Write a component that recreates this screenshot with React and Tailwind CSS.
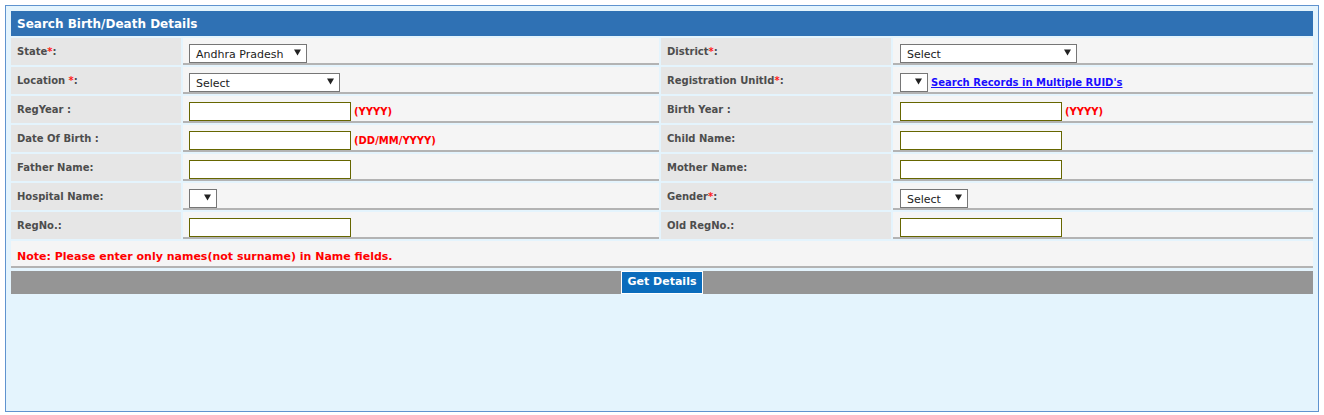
import React from "react";

const font = { fontFamily: '"DejaVu Sans", Verdana, sans-serif' };

function Star() {
  return <span className="text-[#ff1a1a]">*</span>;
}

function FakeSelect({ value, width }) {
  return (
    <div
      className={`flex h-[19px] justify-between border border-[#767676] bg-white pl-[6px] pr-[5px] ${width}`}
    >
      <span className="self-end pb-[1px] text-[11px] leading-[13px] text-[#222]">{value}</span>
      <svg width="7" height="7" viewBox="0 0 7 7" className="mt-[4px] shrink-0">
        <polygon points="0,0.5 7,0.5 3.5,6.5" fill="#222" />
      </svg>
    </div>
  );
}

function TextBox() {
  return <div className="h-[19px] w-[162px] border border-[#666600] bg-white" />;
}

function Hint({ children }) {
  return <span className="ml-[3px] text-[10px] font-bold leading-[19px] text-[#ff0000]">{children}</span>;
}

function Label({ children }) {
  return (
    <div className="flex items-center whitespace-pre bg-[#e6e6e6] pl-[6px] text-[10px] font-bold text-[#4d4d4d]">
      {children}
    </div>
  );
}

function Value({ children, left = "pl-[6px]" }) {
  return (
    <div className={`flex items-start border-b-2 border-[#b3b3b3] bg-[#f5f5f5] pt-[6px] ${left}`}>
      {children}
    </div>
  );
}

const rows = [
  {
    l1: <>State<Star />:</>,
    v1: <FakeSelect value="Andhra Pradesh" width="w-[118px]" />,
    l2: <>District<Star />:</>,
    v2: <FakeSelect value="Select" width="w-[177px]" />,
  },
  {
    l1: <>{"Location "}<Star />:</>,
    v1: <FakeSelect value="Select" width="w-[151px]" />,
    l2: <>Registration UnitId<Star />:</>,
    v2: (
      <div className="flex items-center gap-[3px]">
        <FakeSelect value="" width="w-[28px]" />
        <a href="#" className="text-[10px] font-bold text-[#1a0dff] underline">
          Search Records in Multiple RUID's
        </a>
      </div>
    ),
  },
  {
    l1: "RegYear :",
    v1: <><TextBox /><Hint>(YYYY)</Hint></>,
    l2: "Birth Year :",
    v2: <><TextBox /><Hint>(YYYY)</Hint></>,
  },
  {
    l1: "Date Of Birth :",
    v1: <><TextBox /><Hint>(DD/MM/YYYY)</Hint></>,
    l2: "Child Name:",
    v2: <TextBox />,
  },
  { l1: "Father Name:", v1: <TextBox />, l2: "Mother Name:", v2: <TextBox /> },
  {
    l1: "Hospital Name:",
    v1: <FakeSelect value="" width="w-[28px]" />,
    l2: <>Gender<Star />:</>,
    v2: <FakeSelect value="Select" width="w-[68px]" />,
  },
  { l1: "RegNo.:", v1: <TextBox />, l2: "Old RegNo.:", v2: <TextBox /> },
];

export default function App() {
  return (
    <div className="min-h-[415px] bg-white pt-[5px]" style={font}>
      <div className="mx-[5px] h-[407px] border border-[#5f93cf] bg-[#e4f4fd] p-[5px]">
        <div className="flex flex-col gap-[2px]">
          <div className="flex h-[25px] items-center bg-[#2f71b4] pl-[6px] text-[12px] font-bold text-white">
            Search Birth/Death Details
          </div>
          {rows.map((r, i) => (
            <div key={i} className="grid h-[27px] grid-cols-[170px_476px_230px_420px] gap-[2px]">
              <Label>{r.l1}</Label>
              <Value>{r.v1}</Value>
              <Label>{r.l2}</Label>
              <Value left="pl-[7px]">{r.v2}</Value>
            </div>
          ))}
          <div className="mb-[1px] h-[27px] border-b-2 border-[#b3b3b3] bg-[#f5f5f5] pl-[6px] pt-[9px] text-[11px] font-bold leading-[13px] text-[#ff0000]">
            Note: Please enter only names(not surname) in Name fields.
          </div>
          <div className="flex h-[23px] justify-center bg-[#959595]">
            <button className="h-[23px] w-[82px] border border-white bg-[#0a6cbc] text-[11px] font-bold text-white">
              Get Details
            </button>
          </div>
        </div>
      </div>
    </div>
  );
}
